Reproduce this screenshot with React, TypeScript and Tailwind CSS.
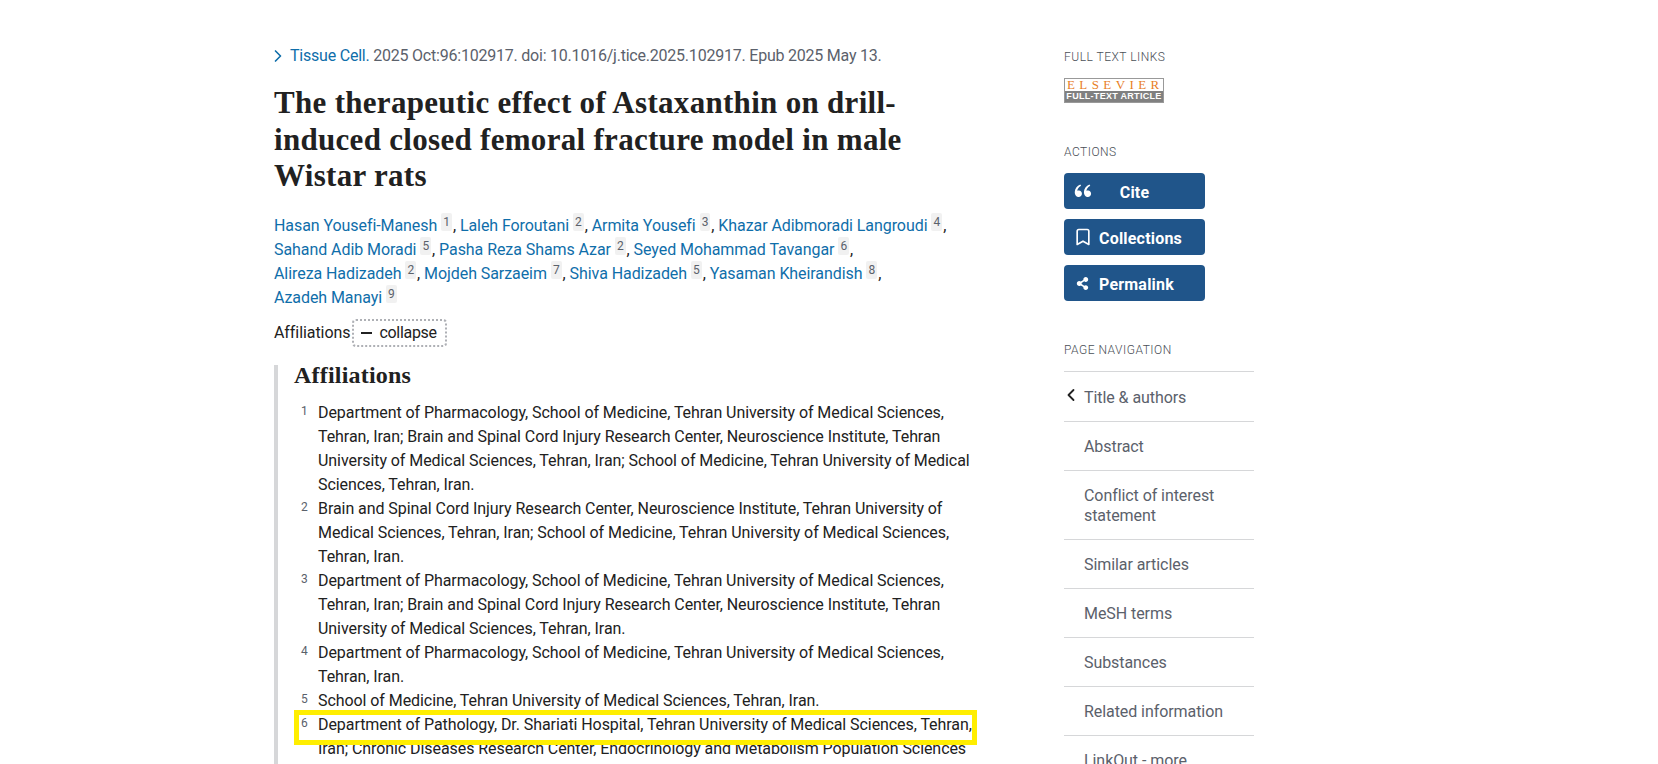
import { Bookmark, ChevronLeft, ChevronRight } from "lucide-react";
import { FaShareAlt } from "react-icons/fa";
import { RiDoubleQuotesL } from "react-icons/ri";

const SANS = "font-['Roboto','Liberation_Sans',sans-serif]";

const AUTHORS: [string, number][][] = [
  [["Hasan Yousefi-Manesh", 1], ["Laleh Foroutani", 2], ["Armita Yousefi", 3], ["Khazar Adibmoradi Langroudi", 4]],
  [["Sahand Adib Moradi", 5], ["Pasha Reza Shams Azar", 2], ["Seyed Mohammad Tavangar", 6]],
  [["Alireza Hadizadeh", 2], ["Mojdeh Sarzaeim", 7], ["Shiva Hadizadeh", 5], ["Yasaman Kheirandish", 8]],
  [["Azadeh Manayi", 9]],
];

const AFFILIATIONS: { n: number; lines: string[] }[] = [
  {
    n: 1,
    lines: [
      "Department of Pharmacology, School of Medicine, Tehran University of Medical Sciences,",
      "Tehran, Iran; Brain and Spinal Cord Injury Research Center, Neuroscience Institute, Tehran",
      "University of Medical Sciences, Tehran, Iran; School of Medicine, Tehran University of Medical",
      "Sciences, Tehran, Iran.",
    ],
  },
  {
    n: 2,
    lines: [
      "Brain and Spinal Cord Injury Research Center, Neuroscience Institute, Tehran University of",
      "Medical Sciences, Tehran, Iran; School of Medicine, Tehran University of Medical Sciences,",
      "Tehran, Iran.",
    ],
  },
  {
    n: 3,
    lines: [
      "Department of Pharmacology, School of Medicine, Tehran University of Medical Sciences,",
      "Tehran, Iran; Brain and Spinal Cord Injury Research Center, Neuroscience Institute, Tehran",
      "University of Medical Sciences, Tehran, Iran.",
    ],
  },
  {
    n: 4,
    lines: ["Department of Pharmacology, School of Medicine, Tehran University of Medical Sciences,", "Tehran, Iran."],
  },
  { n: 5, lines: ["School of Medicine, Tehran University of Medical Sciences, Tehran, Iran."] },
  {
    n: 6,
    lines: [
      "Department of Pathology, Dr. Shariati Hospital, Tehran University of Medical Sciences, Tehran,",
      "Iran; Chronic Diseases Research Center, Endocrinology and Metabolism Population Sciences",
    ],
  },
];

const NAV = ["Abstract", "Conflict of interest statement", "Similar articles", "MeSH terms", "Substances", "Related information", "LinkOut - more resources"];

function SideLabel({ children }: { children: string }) {
  return <h3 className="text-[12px] leading-[16px] font-light uppercase tracking-[0.5px] text-[#4a4f57]">{children}</h3>;
}

function ActionButton({ icon, label, center }: { icon: React.ReactNode; label: string; center?: boolean }) {
  return (
    <button className="flex h-9 w-[141px] items-center rounded-[4px] bg-[#20558a] pt-[3px] text-[16px] font-bold tracking-[0.2px] text-white">
      <span className="flex w-[35px] justify-center pl-[2px]">{icon}</span>
      <span className={center ? "flex-1 pr-[35px] text-center" : ""}>{label}</span>
    </button>
  );
}

export default function App() {
  return (
    <div className={`h-[764px] overflow-hidden bg-white ${SANS} text-[16px] tracking-[-0.07px] text-[#212121]`}>
      <div className="flex pl-[274px] pt-[44px]">
        <main className="w-[790px] shrink-0">
          <div className="flex h-6 items-center whitespace-nowrap tracking-[-0.22px] text-[#5b616b]">
            <ChevronRight size={20} strokeWidth={2} className="ml-[-6px] mr-[2px] text-[#0f6eaa]" />
            <span className="text-[#0f6eaa]">Tissue Cell.</span>&nbsp;2025 Oct:96:102917. doi: 10.1016/j.tice.2025.102917. Epub 2025 May 13.
          </div>
          <h1 className="mt-[17px] font-['Liberation_Serif',serif] text-[31px] leading-[36.6px] font-bold tracking-[0.3px] text-[#212121]">
            The therapeutic effect of Astaxanthin on drill-
            <br />
            induced closed femoral fracture model in male
            <br />
            Wistar rats
          </h1>
          <div className="mt-[19px]">
            {AUTHORS.map((row, i) => (
              <div key={i} className="h-6 leading-6 whitespace-nowrap">
                {row.map(([name, n], j) => (
                  <span key={name}>
                    <span className="text-[#0f6eaa]">{name}</span>
                    <span className="relative top-[-5px] ml-[4px] mr-[1px] rounded-[2px] bg-[#f1f1f1] px-[2px] py-[2px] text-[12px] text-[#5b616b]">{n}</span>
                    {(j < row.length - 1 || i < AUTHORS.length - 1) && ", "}
                  </span>
                ))}
              </div>
            ))}
          </div>
          <div className="mt-[9px] flex h-[28px] items-center gap-[2px]">
            <span>Affiliations</span>
            <button className="flex h-[28px] w-[95px] items-center gap-[7px] rounded-[4px] border-2 border-dotted border-[#aeb0b5] pl-[7px] tracking-[-0.3px]">
              <span className="h-[2px] w-[11px] bg-[#212121]" />
              <span>collapse</span>
            </button>
          </div>
          <section className="relative mt-[19px] min-h-[420px] border-l-[4px] border-[#d6d7d9] pl-[16px]">
            <h3 className="mt-[-1px] font-['Liberation_Serif',serif] text-[24px] leading-[20px] font-bold tracking-[0.2px] text-[#212121]">Affiliations</h3>
            <ul className="mt-[16px]">
              {AFFILIATIONS.map((a) => (
                <li key={a.n} className="relative flex">
                  <span className="w-[24px] pl-[7px] text-[12px] leading-[20px] text-[#5b616b]">{a.n}</span>
                  <div className="whitespace-nowrap leading-6">
                    {a.lines.map((line) => (
                      <div key={line}>{line}</div>
                    ))}
                  </div>
                  {a.n === 6 && <span className="absolute left-0 top-[-3px] h-[35px] w-[683px] border-[5px] border-[#ffee00]" />}
                </li>
              ))}
            </ul>
          </section>
        </main>
        <aside className="w-[190px] shrink-0 pt-[5px]">
          <SideLabel>Full text links</SideLabel>
          <a className="mt-[13px] flex h-[25px] w-[100px] flex-col border border-[#999] bg-white">
            <span className="h-[12px] pl-[2px] text-left font-['Liberation_Serif',serif] text-[13px] leading-[12px] tracking-[4.4px] text-[#e8801f]">ELSEVIER</span>
            <span className="flex-1 bg-[#808080] text-center font-['Liberation_Sans',sans-serif] text-[9px] leading-[11px] font-bold tracking-[0.3px] text-white">FULL-TEXT ARTICLE</span>
          </a>
          <div className="mt-[41px]">
            <SideLabel>Actions</SideLabel>
          </div>
          <div className="mt-[13px] flex flex-col gap-[10px]">
            <ActionButton center label="Cite" icon={<RiDoubleQuotesL size={22} className="mt-[-3px]" />} />
            <ActionButton label="Collections" icon={<Bookmark size={20} strokeWidth={2} className="mt-[-3px]" />} />
            <ActionButton label="Permalink" icon={<FaShareAlt size={13} className="mt-[-3px]" />} />
          </div>
          <div className="mt-[41px]">
            <SideLabel>Page navigation</SideLabel>
          </div>
          <nav className="mt-[13px] border-t border-[#d6d7d9] text-[#5b616b]">
            <div className="relative flex min-h-[50px] items-center border-b border-[#d6d7d9] pl-[20px] pt-[2px]">
              <ChevronLeft size={20} strokeWidth={2.2} className="absolute left-[-3px] top-[13px] text-[#212121]" />
              Title &amp; authors
            </div>
            {NAV.map((item) => (
              <div key={item} className="border-b border-[#d6d7d9] pt-[15px] pb-[13px] pl-[20px] pr-[16px] leading-[20px]">
                {item}
              </div>
            ))}
          </nav>
        </aside>
      </div>
    </div>
  );
}
